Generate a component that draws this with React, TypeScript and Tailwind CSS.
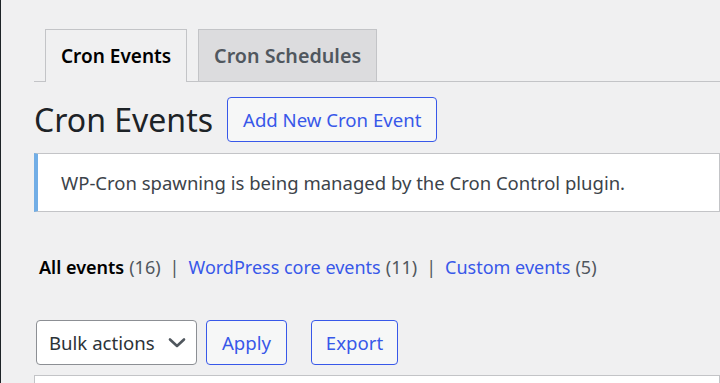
import React from "react";

export default function App() {
  return (
    <div
      className="min-h-[383px] w-[720px] overflow-hidden border-l border-[#1d2327] bg-[#f0f0f1] text-[#1d2327]"
      style={{ fontFamily: '"Noto Sans", "Open Sans", sans-serif' }}
    >
      <div className="pl-[33px]">
        {/* Tabs */}
        <div className="flex items-end gap-[11px] border-b border-[#c3c4c7] pl-[11px] pt-[29px]">
          <div className="-mb-px flex h-[53px] items-center border border-b-0 border-[#c3c4c7] bg-[#f0f0f1] px-[15px] text-[19px] font-semibold text-black">
            Cron Events
          </div>
          <div className="flex h-[52px] items-center border border-b-0 border-[#c3c4c7] bg-[#dcdcde] px-[15px] text-[19.7px] font-semibold text-[#50575e]">
            Cron Schedules
          </div>
        </div>

        {/* Heading */}
        <div className="mt-[15px] flex items-center gap-[14px]">
          <h1 className="text-[32px] font-normal leading-none text-[#1d2327]">Cron Events</h1>
          <button className="flex h-[45px] items-center rounded-[4px] border border-[#3858e9] bg-[#f6f7f7] px-[15px] text-[18.6px] text-[#3858e9]">
            Add New Cron Event
          </button>
        </div>

        {/* Notice */}
        <div className="mt-[11px] flex h-[59px] items-center border border-l-4 border-[#c3c4c7] border-l-[#72aee6] bg-white pl-[23px]">
          <span className="text-[18.5px] text-[#3c434a]">
            WP-Cron spawning is being managed by the Cron Control plugin.
          </span>
        </div>

        {/* Filters */}
        <div className="mt-[42px] flex items-center pl-[5px] text-[18px] text-[#50575e]">
          <span className="font-semibold text-black">All events</span>
          <span className="ml-[5px]">(16)</span>
          <span className="mx-[9px] text-[#50575e]">|</span>
          <span className="text-[#3858e9]">WordPress core events</span>
          <span className="ml-[5px]">(11)</span>
          <span className="mx-[9px] text-[#50575e]">|</span>
          <span className="text-[#3858e9]">Custom events</span>
          <span className="ml-[5px]">(5)</span>
        </div>

        {/* Actions */}
        <div className="mt-[39px] flex items-center pl-[2px]">
          <div className="flex h-[45px] w-[161px] items-center justify-between rounded-[4px] border border-[#8c8f94] bg-white pl-[12px] pr-[10px] text-[18.6px] text-[#2c3338]">
            <span>Bulk actions</span>
            <svg width="18" height="12" viewBox="0 0 18 12" fill="none">
              <path d="M2 2.5 L9 9 L16 2.5" stroke="#50575e" strokeWidth="2.6" strokeLinecap="round" strokeLinejoin="round" />
            </svg>
          </div>
          <button className="ml-[9px] flex h-[45px] w-[81px] items-center justify-center rounded-[4px] border border-[#3858e9] bg-[#f6f7f7] text-[18.6px] text-[#3858e9]">
            Apply
          </button>
          <button className="ml-[24px] flex h-[45px] w-[87px] items-center justify-center rounded-[4px] border border-[#3858e9] bg-[#f6f7f7] text-[18.6px] text-[#3858e9]">
            Export
          </button>
        </div>

        {/* Table top */}
        <div className="mt-[10px] h-[20px] border border-[#c3c4c7] bg-white" />
      </div>
    </div>
  );
}
